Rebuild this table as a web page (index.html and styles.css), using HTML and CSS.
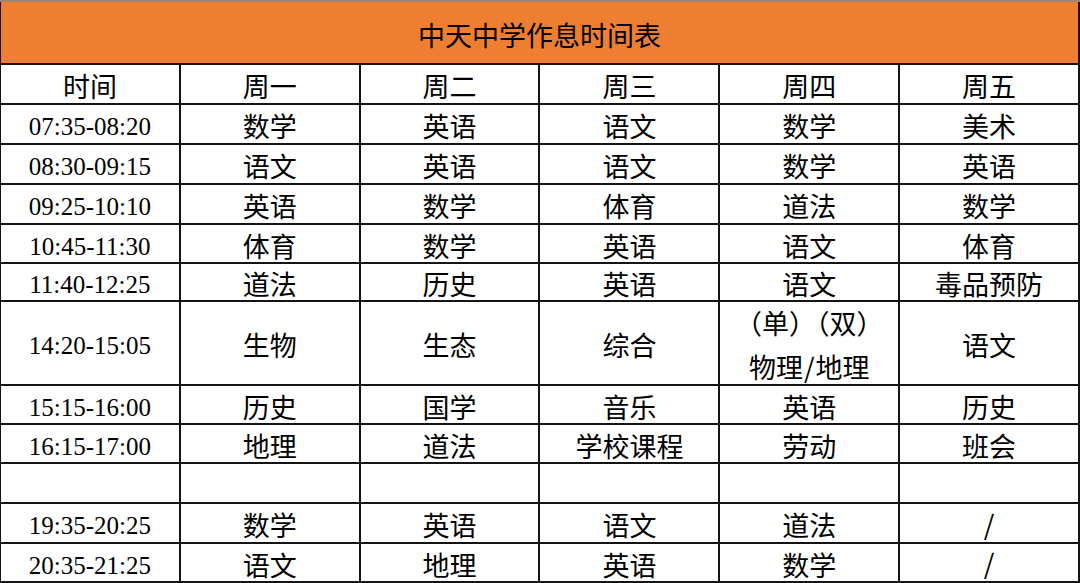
FILE: index.html
```html
<!DOCTYPE html>
<html lang="zh-CN">
<head>
<meta charset="utf-8">
<title>中天中学作息时间表</title>
<link rel="stylesheet" href="styles.css">
</head>
<body>
<div class="sheet">
  <div class="cell title">中天中学作息时间表</div>

  <div class="cell">时间</div><div class="cell">周一</div><div class="cell">周二</div><div class="cell">周三</div><div class="cell">周四</div><div class="cell">周五</div>

  <div class="cell time">07:35-08:20</div><div class="cell">数学</div><div class="cell">英语</div><div class="cell">语文</div><div class="cell">数学</div><div class="cell">美术</div>

  <div class="cell time">08:30-09:15</div><div class="cell">语文</div><div class="cell">英语</div><div class="cell">语文</div><div class="cell">数学</div><div class="cell">英语</div>

  <div class="cell time">09:25-10:10</div><div class="cell">英语</div><div class="cell">数学</div><div class="cell">体育</div><div class="cell">道法</div><div class="cell">数学</div>

  <div class="cell time">10:45-11:30</div><div class="cell">体育</div><div class="cell">数学</div><div class="cell">英语</div><div class="cell">语文</div><div class="cell">体育</div>

  <div class="cell time">11:40-12:25</div><div class="cell">道法</div><div class="cell">历史</div><div class="cell">英语</div><div class="cell">语文</div><div class="cell">毒品预防</div>

  <div class="cell time">14:20-15:05</div><div class="cell">生物</div><div class="cell">生态</div><div class="cell">综合</div><div class="cell two"><span>（单）（双）</span><span>物理<span class="sl">/</span>地理</span></div><div class="cell">语文</div>

  <div class="cell time">15:15-16:00</div><div class="cell">历史</div><div class="cell">国学</div><div class="cell">音乐</div><div class="cell">英语</div><div class="cell">历史</div>

  <div class="cell time">16:15-17:00</div><div class="cell">地理</div><div class="cell">道法</div><div class="cell">学校课程</div><div class="cell">劳动</div><div class="cell">班会</div>

  <div class="cell"></div><div class="cell"></div><div class="cell"></div><div class="cell"></div><div class="cell"></div><div class="cell"></div>

  <div class="cell time">19:35-20:25</div><div class="cell">数学</div><div class="cell">英语</div><div class="cell">语文</div><div class="cell">道法</div><div class="cell slc"><span class="sl">/</span></div>

  <div class="cell time">20:35-21:25</div><div class="cell">语文</div><div class="cell">地理</div><div class="cell">英语</div><div class="cell">数学</div><div class="cell slc"><span class="sl">/</span></div>
</div>
</body>
</html>
```

FILE: styles.css
```css
html, body {
  margin: 0;
  padding: 0;
  background: #fff;
}

.sheet {
  box-sizing: border-box;
  width: 1080px;
  height: 583px;
  display: grid;
  grid-template-columns: repeat(6, 1fr);
  grid-template-rows: 61px 38px 38px 38px 38px 37px 36px 82px 37px 37px 38px 38px 37px;
  gap: 2px;
  padding: 0 2px 2px 1px;
  border-top: 2px solid #a08676;
  background: #141414;
  font-family: "Liberation Serif", "Noto Sans CJK SC", serif;
  color: #000;
}

.cell {
  background: #fff;
  display: flex;
  align-items: center;
  justify-content: center;
  font-size: 27px;
  line-height: 1;
  padding-top: 9px;
  box-sizing: border-box;
  white-space: nowrap;
}

.title {
  grid-column: 1 / -1;
  background: #ed7e32;
  padding-top: 10px;
}

.time {
  padding-top: 5px;
  font-size: 25px;
}

.two {
  flex-direction: column;
  line-height: 41px;
  padding-top: 9px;
}

.sl {
  font-family: "Noto Sans CJK SC", sans-serif;
  margin: 0 1px;
}

.slc {
  padding-top: 0;
}
```
